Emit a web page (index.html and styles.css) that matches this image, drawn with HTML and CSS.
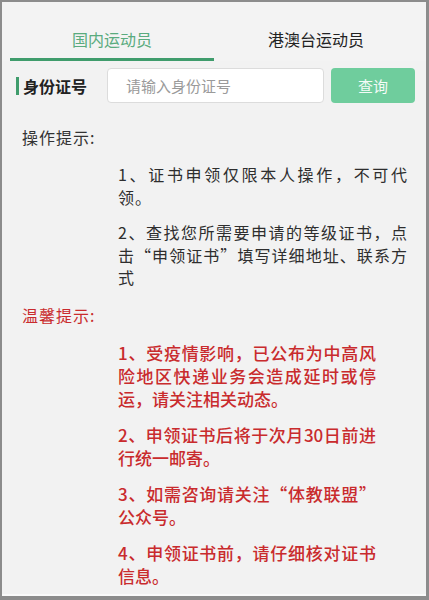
FILE: index.html
```html
<!DOCTYPE html>
<html lang="zh-CN">
<head>
<meta charset="utf-8">
<link rel="stylesheet" href="styles.css">
</head>
<body>
<div class="frame">
  <div class="tabs">
    <div class="tab active">国内运动员</div>
    <div class="tab">港澳台运动员</div>
  </div>
  <div class="search">
    <div class="label">身份证号</div>
    <div class="input">请输入身份证号</div>
    <div class="btn">查询</div>
  </div>
  <div class="section">
    <div class="heading">操作提示:</div>
    <ul class="list gray">
      <li>1、证书申领仅限本人操作，不可代领。</li>
      <li>2、查找您所需要申请的等级证书，点击“申领证书”填写详细地址、联系方式</li>
    </ul>
    <div class="heading red">温馨提示:</div>
    <ul class="list redlist">
      <li>1、受疫情影响，已公布为中高风险地区快递业务会造成延时或停运，请关注相关动态。</li>
      <li>2、申领证书后将于次月30日前进行统一邮寄。</li>
      <li>3、如需咨询请关注“体教联盟”公众号。</li>
      <li>4、申领证书前，请仔细核对证书信息。</li>
    </ul>
  </div>
</div>
</body>
</html>
```
FILE: styles.css
```css
html, body { margin: 0; padding: 0; }
body {
  width: 429px;
  height: 600px;
  background: #8c8c8c;
  font-family: "Noto Sans CJK SC", "Noto Sans", sans-serif;
  overflow: hidden;
}
.frame {
  margin: 2px 3px 0 2px;
  height: 594px;
  background: #f2f2f2;
  border-bottom: 2px solid #fafafa;
  box-sizing: border-box;
  overflow: hidden;
}
.tabs {
  display: flex;
  height: 59px;
  padding: 0 8px;
  background: #f3f3f3;
}
.tab {
  flex: 1;
  text-align: center;
  font-size: 16px;
  color: #222;
  line-height: 20px;
  padding-top: 27px;
  box-sizing: border-box;
}
.tab.active {
  color: #5aab7e;
  border-bottom: 3px solid #3f9c6c;
}
.search {
  display: flex;
  align-items: center;
  padding: 7px 14px 0 14px;
  height: 35px;
}
.label {
  border-left: 3px solid #3f9c6c;
  padding-left: 4px;
  height: 18px;
  line-height: 18px;
  font-size: 16px;
  font-weight: bold;
  color: #222;
  width: 84px;
  flex: none;
}
.input {
  width: 217px;
  height: 35px;
  box-sizing: border-box;
  border: 1px solid #dcdcdc;
  border-radius: 4px;
  background: #fff;
  color: #9a9a9a;
  font-size: 15px;
  line-height: 33px;
  padding-left: 18px;
  flex: none;
}
.btn {
  margin-left: 7px;
  width: 84px;
  height: 35px;
  border-radius: 4px;
  background: #6fcd9d;
  color: #f4fbf7;
  font-size: 15px;
  line-height: 35px;
  text-align: center;
  flex: none;
}
.section {
  padding: 22px 0 0 20px;
}
.heading {
  font-size: 16px;
  letter-spacing: 1px;
  color: #333;
  line-height: 24px;
}
.heading.red { color: #c92b2d; margin-top: 14px; }
.list {
  list-style: none;
  margin: 0;
  padding: 0 0 0 96px;
}
.list li {
  text-align: justify;
}
.gray { width: 290px; margin-top: 14px; }
.gray li {
  font-size: 16px;
  letter-spacing: 1px;
  color: #2e2e2e;
  line-height: 22.5px;
  margin-bottom: 13px;
}
.redlist { width: 258px; margin-top: 14px; }
.redlist li {
  font-size: 17px;
  font-weight: 500;
  color: #c92b2d;
  line-height: 23px;
  margin-bottom: 13px;
}
```
